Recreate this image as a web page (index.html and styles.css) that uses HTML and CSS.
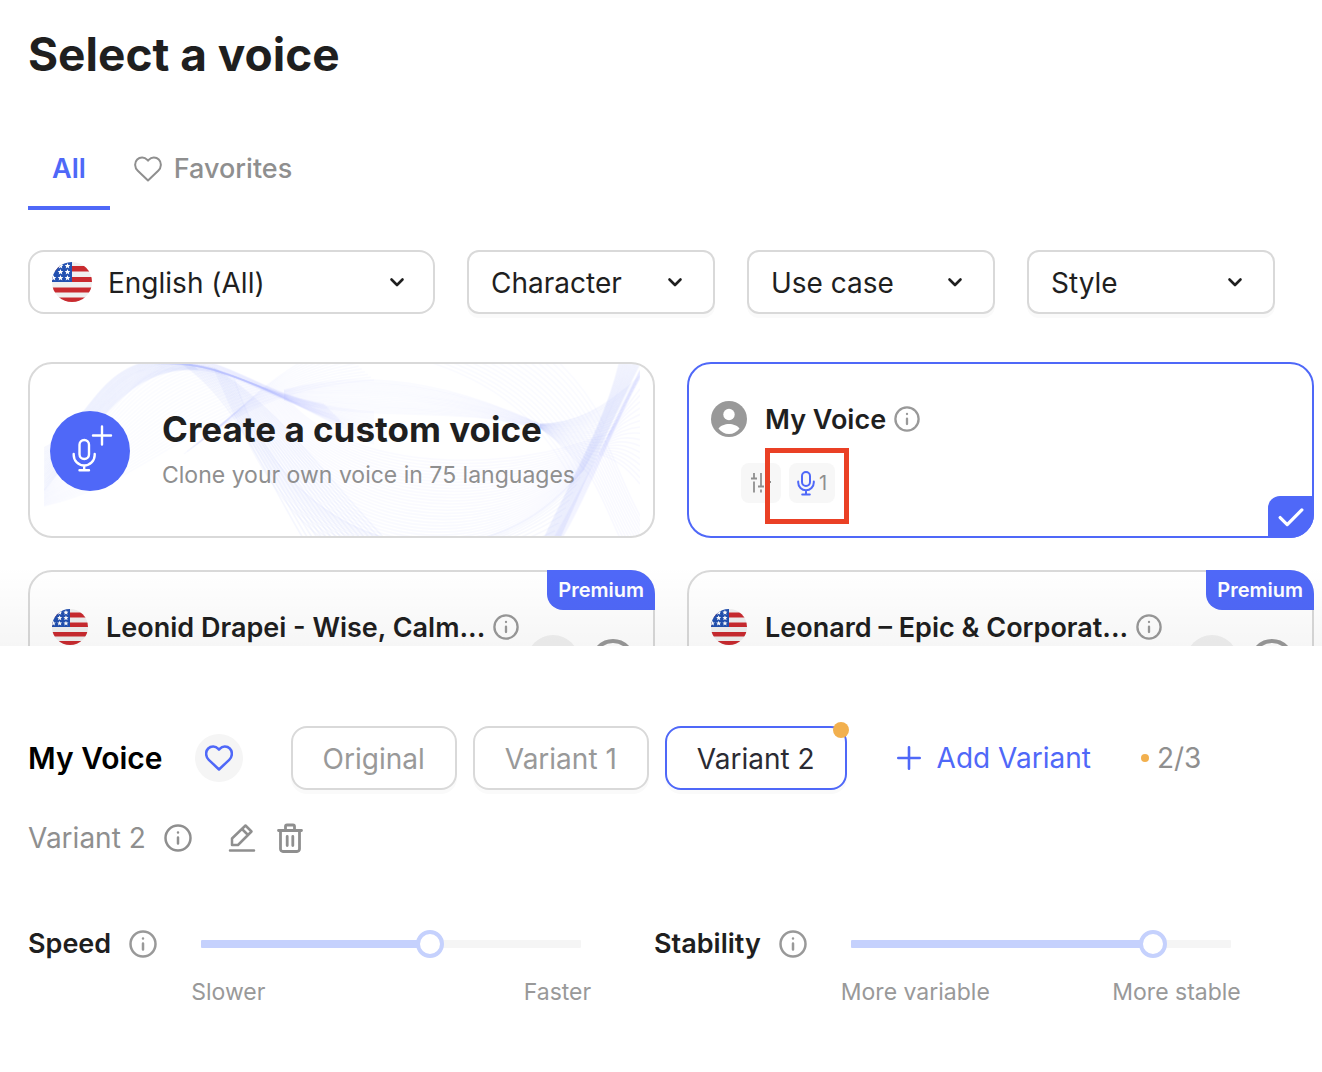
FILE: index.html
```html
<!DOCTYPE html>
<html lang="en">
<head>
    <meta charset="utf-8">
    <meta name="viewport" content="width=device-width, initial-scale=1">
    <title>Select a voice</title>
    <link rel="stylesheet" href="styles.css">
</head>
<body>
    <svg class="sprite" aria-hidden="true">
        <symbol id="flag-us" viewBox="0 0 40 40">
            <clipPath id="flagClip"><circle cx="20" cy="20" r="20"/></clipPath>
            <g clip-path="url(#flagClip)">
                <path fill="#f0f0f0" d="M0 0h40v40H0z"/>
                <path fill="#c92a2f" d="M0 4h40v5.500H0zM0 15h40v5H0zM0 25.500h40v5H0zM0 35.500h40v5H0z"/>
                <path fill="#2250b0" d="M0 0h20v20H0z"/>
                <path fill="#fff" d="m15.500 1 .8 1.900 2 .1-1.500 1.400.5 2-1.800-1.100-1.800 1.100.5-2L12.700 3l2-.1zM8.500 1l.8 1.900 2 .1-1.500 1.400.5 2-1.800-1.100-1.800 1.100.5-2L5.700 3l2-.1zM15.500 7l.8 1.900 2 .1-1.500 1.400.5 2-1.800-1.100-1.800 1.100.5-2L12.700 9l2-.1zM8.500 7l.8 1.900 2 .1-1.500 1.400.5 2-1.800-1.100-1.800 1.100.5-2L5.700 9l2-.1zM15.500 13l.8 1.900 2 .1-1.500 1.400.5 2-1.800-1.100-1.800 1.100.5-2-1.500-1.400 2-.1zM8.500 13l.8 1.900 2 .1-1.500 1.400.5 2-1.800-1.100-1.800 1.100.5-2L5.700 15l2-.1zM1.500 13l.8 1.900 2 .1-1.500 1.400.5 2-1.800-1.100-1.800 1.100.5-2-1.500-1.400 2-.1z"/>
            </g>
        </symbol>
        <symbol id="icon-heart" viewBox="0 0 28 28">
            <path fill="none" stroke="currentColor" stroke-linejoin="round" d="M14 25.500 3.800 15.800C.4 12.600.3 7.400 3.200 4.500c2.800-2.700 7.500-2.400 9.800.1l1 1.100 1-1.100c2.300-2.500 7-2.800 9.800-.1 2.900 2.900 2.800 8.100-.6 11.300z"/>
        </symbol>
        <symbol id="icon-info" viewBox="0 0 28 28">
            <circle cx="14" cy="14" r="12.500" fill="none" stroke="currentColor" stroke-width="2.500"/>
            <path fill="none" stroke="currentColor" stroke-width="2.500" stroke-linecap="round" d="M14 13.500v6M14 8.500v.1"/>
        </symbol>
        <symbol id="icon-chevron" viewBox="0 0 16 16">
            <path fill="none" stroke="currentColor" stroke-width="2.600" stroke-linecap="round" stroke-linejoin="round" d="m2.500 5.500 5.500 5.500 5.500-5.500"/>
        </symbol>
    </svg>

    <main class="voicePage">
        <h1 class="title">Select a voice</h1>

        <nav class="tabs">
            <button class="tab active" type="button">All</button>
            <button class="tab" type="button">
                <svg class="tabIcon"><use href="#icon-heart"/></svg>
                Favorites
            </button>
        </nav>

        <div class="filters">
            <div class="filter wide">
                <svg class="filterFlag"><use href="#flag-us"/></svg>
                <select aria-label="Language"><option>English (All)</option></select>
                <svg class="chevron"><use href="#icon-chevron"/></svg>
            </div>
            <div class="filter">
                <select aria-label="Character"><option>Character</option></select>
                <svg class="chevron"><use href="#icon-chevron"/></svg>
            </div>
            <div class="filter">
                <select aria-label="Use case"><option>Use case</option></select>
                <svg class="chevron"><use href="#icon-chevron"/></svg>
            </div>
            <div class="filter">
                <select aria-label="Style"><option>Style</option></select>
                <svg class="chevron"><use href="#icon-chevron"/></svg>
            </div>
        </div>

        <section class="voiceList">
            <article class="card create">
                <svg class="waves" id="waves" viewBox="0 0 596 172" preserveAspectRatio="none"></svg>
                <svg class="createIcon" viewBox="0 0 80 80">
                    <circle cx="40" cy="40" r="40" fill="#4f68f8"/>
                    <g fill="none" stroke="#fff" stroke-width="2.400" stroke-linecap="round">
                        <rect x="29.500" y="29" width="9.500" height="19" rx="4.750"/>
                        <path d="M23.700 43v1a10.500 10.500 0 0 0 21 0v-1M34.200 55v4M29.500 59.300h9.500M52 15.500v18M43 24.500h18"/>
                    </g>
                </svg>
                <div class="createText">
                    <h2>Create a custom voice</h2>
                    <p>Clone your own voice in 75 languages</p>
                </div>
            </article>

            <article class="card selected">
                <div class="cardBody">
                    <div class="cardHead">
                        <svg class="avatar" viewBox="0 0 36 36">
                            <circle cx="18" cy="18" r="18" fill="#999"/>
                            <circle cx="18" cy="13.500" r="5.700" fill="#fff"/>
                            <path fill="#fff" d="M7.500 27.500C9.500 24.500 14 23 18 23s8.500 1.500 10.500 4.500C26 31 22.300 33 18 33s-8-2-10.500-5.500z"/>
                        </svg>
                        <h3>My Voice</h3>
                        <svg class="info small"><use href="#icon-info"/></svg>
                    </div>
                    <div class="chips">
                        <span class="chip">
                            <svg class="chipSliders" viewBox="0 0 24 24" fill="none" stroke="#8f8f8f" stroke-width="1.800">
                                <path d="M5 2v5M2 7.500h6M5 10.500v11M12 2v13M9 15.500h6M12 18.500v3M19 2v7M16 11h6M19 13.500v8"/>
                            </svg>
                        </span>
                        <span class="chip marked">
                            <svg class="chipMic" viewBox="0 0 18 26" fill="none" stroke="#4f68f8" stroke-width="2" stroke-linecap="round">
                                <rect x="5" y="2" width="8" height="14" rx="4"/>
                                <path d="M1.200 11.500v1a7.800 7.800 0 0 0 15.600 0v-1M9 20.500V24M5.200 24.500h7.600"/>
                            </svg>
                            1
                        </span>
                    </div>
                </div>
                <span class="check">
                    <svg viewBox="0 0 24 18" fill="none" stroke="#fff" stroke-width="3" stroke-linecap="round" stroke-linejoin="round"><path d="m2 9.500 6.500 6.500L22 2.500"/></svg>
                </span>
            </article>

            <article class="card">
                <span class="premium">Premium</span>
                <div class="cardBody">
                    <div class="cardHead">
                        <svg class="avatar"><use href="#flag-us"/></svg>
                        <h3>Leonid Drapei - Wise, Calm...</h3>
                        <svg class="info small"><use href="#icon-info"/></svg>
                    </div>
                </div>
                <div class="actions">
                    <button class="roundButton" type="button" aria-label="Add to favorites"></button>
                    <button class="ringButton" type="button" aria-label="Play"></button>
                </div>
            </article>

            <article class="card">
                <span class="premium">Premium</span>
                <div class="cardBody">
                    <div class="cardHead">
                        <svg class="avatar"><use href="#flag-us"/></svg>
                        <h3>Leonard – Epic &amp; Corporat...</h3>
                        <svg class="info small"><use href="#icon-info"/></svg>
                    </div>
                </div>
                <div class="actions">
                    <button class="roundButton" type="button" aria-label="Add to favorites"></button>
                    <button class="ringButton" type="button" aria-label="Play"></button>
                </div>
            </article>
        </section>

        <section class="panel">
            <div class="variants">
                <h2 class="voiceName">My Voice</h2>
                <button class="favorite" type="button" aria-label="Favorite"><svg><use href="#icon-heart"/></svg></button>
                <div class="variantButtons">
                    <button class="variant" type="button">Original</button>
                    <button class="variant" type="button">Variant 1</button>
                    <button class="variant current" type="button">Variant 2</button>
                </div>
                <button class="addVariant" type="button">
                    <svg viewBox="0 0 24 24" fill="none" stroke="currentColor" stroke-width="2.600" stroke-linecap="round"><path d="M12 1.300v21.400M1.300 12h21.400"/></svg>
                    Add Variant
                </button>
                <span class="counter">2/3</span>
            </div>

            <div class="variantInfo">
                <span>Variant 2</span>
                <svg class="info"><use href="#icon-info"/></svg>
                <button class="iconButton edit" type="button" aria-label="Rename">
                    <svg viewBox="0 0 28 30" fill="none" stroke="currentColor" stroke-width="2.500" stroke-linecap="round" stroke-linejoin="round">
                        <path d="M4 22v-6.500L17.500 2.500l6 6L10 22zM14 6l6 6M2 27.500h24"/>
                    </svg>
                </button>
                <button class="iconButton" type="button" aria-label="Delete">
                    <svg viewBox="0 0 28 30" fill="none" stroke="currentColor" stroke-width="2.800" stroke-linecap="round" stroke-linejoin="round">
                        <path d="M2.500 7.500h23M4.500 8v18A2.500 2.500 0 0 0 7 28.500h14a2.500 2.500 0 0 0 2.500-2.500V8M9.500 7V3.500A1.500 1.500 0 0 1 11 2h6a1.500 1.500 0 0 1 1.500 1.500V7M11.200 13.500v9M16.800 13.500v9"/>
                    </svg>
                </button>
            </div>

            <div class="settings">
                <div class="setting">
                    <label for="speed">Speed</label>
                    <svg class="info"><use href="#icon-info"/></svg>
                    <div class="control">
                        <input id="speed" type="range" min="0" max="100" value="61" style="--fill: 60%">
                        <div class="ends"><span>Slower</span><span>Faster</span></div>
                    </div>
                </div>
                <div class="setting">
                    <label for="stability">Stability</label>
                    <svg class="info"><use href="#icon-info"/></svg>
                    <div class="control">
                        <input id="stability" type="range" min="0" max="100" value="82" style="--fill: 80%">
                        <div class="ends"><span>More variable</span><span>More stable</span></div>
                    </div>
                </div>
            </div>
        </section>
    </main>
    <script src="waves.js"></script>
</body>
</html>
```

FILE: styles.css
```css
* {
    box-sizing: border-box;
}

body {
    margin: 0;
    background: #fff;
    color: #1f1f1f;
    font-family: Inter, "Liberation Sans", sans-serif;
    font-size: 28px;
    line-height: 32px;
}

h1, h2, h3, p {
    margin: 0;
}

button, select {
    font: inherit;
    color: inherit;
}

button {
    padding: 0;
    border: 0;
    background: none;
    cursor: pointer;
}

svg {
    display: block;
    flex: none;
}

.sprite {
    position: absolute;
    width: 0;
    height: 0;
}

.voicePage {
    display: flex;
    flex-direction: column;
    height: 100vh;
}

.title {
    padding: 26px 28px 0;
    font-size: 46px;
    line-height: 56px;
    font-weight: 700;
}

/* tabs */
.tabs {
    display: flex;
    margin: 44px 28px 0;
}

.tab {
    display: flex;
    align-items: center;
    gap: 12px;
    height: 84px;
    padding: 2px 24px 0;
    border-top: 4px solid transparent;
    border-bottom: 4px solid transparent;
    color: #8f8f8f;
    font-size: 27px;
    font-weight: 500;
}

.tab.active {
    border-bottom-color: #4f68f8;
    color: #4f68f8;
    font-weight: 600;
}

.tabIcon {
    width: 28px;
    height: 28px;
    stroke-width: 2;
}

/* filters */
.filters {
    display: flex;
    gap: 32px;
    padding: 40px 8px 0 28px;
}

.filter {
    display: flex;
    align-items: center;
    flex: 0 1 248px;
    height: 64px;
    padding: 0 30px 0 22px;
    border: 2px solid #d9d9d9;
    border-radius: 12px;
    box-shadow: 0 4px 0 #fafafa;
}

.filter.wide {
    flex-basis: 407px;
    padding-right: 28px;
    border-radius: 16px;
    box-shadow: none;
}

.filterFlag {
    width: 40px;
    height: 40px;
    margin-right: 16px;
}

.filter select {
    flex: 1;
    min-width: 0;
    padding: 2px 0 0;
    border: 0;
    background: none;
    appearance: none;
}

.chevron {
    width: 16px;
    height: 16px;
}

/* voice cards */
.voiceList {
    position: relative;
    display: grid;
    grid-template-columns: 1fr 1fr;
    grid-auto-rows: 176px;
    gap: 32px;
    flex: 1;
    min-height: 0;
    margin-top: 48px;
    padding: 0 8px 0 28px;
    overflow: hidden;
}

.voiceList::after {
    content: "";
    position: absolute;
    inset: auto 0 0 0;
    height: 80px;
    background: linear-gradient(rgba(0, 0, 0, 0), rgba(0, 0, 0, 0.035));
    pointer-events: none;
}

.card {
    position: relative;
    display: flex;
    min-width: 0;
    border: 2px solid #d9d9d9;
    border-radius: 24px;
}

.card.selected {
    border-color: #4f68f8;
}

.create {
    align-items: center;
    gap: 32px;
    padding: 2px 0 0 20px;
    overflow: hidden;
}

.waves {
    position: absolute;
    inset: 0 13px 0 14px;
    width: calc(100% - 27px);
    height: 100%;
    opacity: 0.5;
}

.createIcon {
    position: relative;
    width: 80px;
    height: 80px;
}

.createText {
    position: relative;
}

.createText h2 {
    font-size: 35px;
    line-height: 48px;
    font-weight: 700;
}

.createText p {
    margin-top: 6px;
    margin-bottom: 6px;
    color: #8f8f8f;
    font-size: 23px;
}

.cardBody {
    flex: 1;
    padding: 36px 0 0 22px;
}

.cardHead {
    display: flex;
    align-items: center;
    height: 38px;
}

.cardHead h3 {
    margin: 0 8px 0 18px;
    padding-top: 2px;
    font-size: 27px;
    font-weight: 600;
    white-space: nowrap;
}

.avatar {
    width: 36px;
    height: 36px;
}

.info {
    width: 28px;
    height: 28px;
    color: #999;
}

.info.small {
    width: 26px;
    height: 26px;
}

.chips {
    display: flex;
    gap: 8px;
    margin: 25px 0 0 30px;
}

.chip {
    position: relative;
    display: flex;
    align-items: center;
    gap: 4px;
    height: 40px;
    padding: 0 8px;
    border-radius: 8px;
    background: #f7f7f7;
    color: #8f8f8f;
    font-size: 20px;
}

.chipSliders {
    width: 24px;
    height: 24px;
}

.chipMic {
    width: 18px;
    height: 26px;
}

.chip.marked::after {
    content: "";
    position: absolute;
    inset: -15px -14px -21px -24px;
    border: 5px solid #ea4025;
}

.check {
    position: absolute;
    right: -2px;
    bottom: -2px;
    display: grid;
    place-items: center;
    width: 46px;
    height: 42px;
    border-radius: 12px 0 24px 0;
    background: #4f68f8;
}

.check svg {
    width: 26px;
    height: 20px;
}

.premium {
    position: absolute;
    top: -2px;
    right: -2px;
    padding: 0 11px;
    border-radius: 0 24px 0 16px;
    background: #4f68f8;
    color: #fff;
    font-size: 20px;
    line-height: 40px;
    font-weight: 600;
}

.actions {
    display: flex;
    align-items: center;
    align-self: flex-start;
    gap: 12px;
    padding: 63px 18px 0 0;
}

.roundButton {
    width: 52px;
    height: 52px;
    border-radius: 50%;
    background: #f0f0f0;
}

.ringButton {
    width: 44px;
    height: 44px;
    border: 4px solid #999;
    border-radius: 50%;
}

/* bottom panel */
.panel {
    padding: 80px 42px 64px 28px;
}

.variants {
    display: flex;
    align-items: center;
    white-space: nowrap;
}

.voiceName {
    color: #000;
    font-size: 30px;
    font-weight: 600;
}

.favorite {
    display: grid;
    place-items: center;
    width: 48px;
    height: 48px;
    margin: 0 48px 0 32px;
    border-radius: 50%;
    background: #f5f5f5;
    color: #4f68f8;
}

.favorite svg {
    width: 28px;
    height: 28px;
    stroke-width: 2.5;
}

.variantButtons {
    display: flex;
    gap: 16px;
}

.variant {
    position: relative;
    height: 64px;
    padding: 2px 30px 0;
    border: 2px solid #d9d9d9;
    border-radius: 16px;
    box-shadow: 0 4px 0 #fafafa;
    color: #999;
}

.variant.current {
    border-color: #4f68f8;
    color: #2b2b33;
}

.variant.current::after {
    content: "";
    position: absolute;
    top: -6px;
    right: -4px;
    width: 16px;
    height: 16px;
    border-radius: 50%;
    background: #f2b04e;
}

.addVariant {
    display: flex;
    align-items: center;
    gap: 16px;
    margin: 0 50px;
    color: #4f68f8;
}

.addVariant svg {
    width: 24px;
    height: 24px;
}

.counter {
    display: flex;
    align-items: center;
    gap: 8px;
    color: #8f8f8f;
}

.counter::before {
    content: "";
    width: 8px;
    height: 8px;
    border-radius: 50%;
    background: #f2b04e;
}

.variantInfo {
    display: flex;
    align-items: center;
    margin-top: 32px;
    color: #8f8f8f;
}

.variantInfo .info {
    margin-left: 18px;
    color: #8f8f8f;
}

.iconButton {
    margin-left: 20px;
}

.iconButton.edit {
    margin-left: 36px;
}

.iconButton svg {
    width: 28px;
    height: 30px;
}

.settings {
    display: grid;
    grid-template-columns: 1fr 1fr;
    margin-top: 76px;
}

.setting {
    display: flex;
    align-items: flex-start;
}

.setting label {
    font-size: 27px;
    font-weight: 600;
    line-height: 28px;
}

.setting .info {
    margin-left: 18px;
}

.control {
    flex: 0 1 400px;
    margin-left: 34px;
    color: #999;
    font-size: 23px;
}

.control input {
    display: block;
    width: calc(100% - 20px);
    height: 28px;
    margin: 0 10px;
    background: none;
    appearance: none;
}

.control input::-webkit-slider-runnable-track {
    height: 8px;
    border-radius: 1px;
    background: linear-gradient(to right, #c5d1fd var(--fill), #f5f5f5 var(--fill));
}

.control input::-webkit-slider-thumb {
    width: 28px;
    height: 28px;
    margin-top: -10px;
    border: 4px solid #c5d1fd;
    border-radius: 50%;
    background: #fff;
    appearance: none;
}

.ends {
    display: flex;
    justify-content: space-between;
    margin-top: 18px;
}
```

FILE: waves.js
```js
var svg = document.getElementById("waves");

// Each ribbon blends one curve into another: [from, to, lines, opacity]
var ribbons = [
    // left arch
    [[0, 84, 50, 60, 50, -10, 140, -6], [0, 126, 50, 70, 80, 0, 155, 6], 24, 0.1],
    [[140, -6, 190, -2, 220, 30, 280, 40], [155, 6, 190, 8, 220, 30, 300, 60], 14, 0.07],
    [[0, 126, 60, 70, 80, 2, 150, -4], [0, 142, 90, 122, 140, 60, 240, 31], 24, 0.04],
    [[110, 0, 180, -8, 220, 40, 330, 48], [150, 0, 200, 10, 250, 40, 330, 80], 18, 0.05],
    // upper right sweep
    [[140, 90, 200, 40, 260, 20, 330, 16], [180, 60, 220, 20, 250, 0, 290, -20], 14, 0.05],
    [[240, 26, 340, 0, 430, 30, 496, 60], [240, 36, 330, 60, 420, 40, 496, 66], 20, 0.05],
    [[250, -30, 400, -10, 480, 20, 530, 120], [420, -60, 500, -30, 540, 20, 560, 60], 16, 0.05],
    // large fan
    [[133, -3, 190, 30, 220, 110, 259, 174], [170, 4, 230, 40, 280, 110, 340, 174], 18, 0.1],
    [[190, 14, 250, 200, 440, 230, 540, 105], [240, 31, 300, 110, 470, 110, 560, 70], 28, 0.06],
    [[170, 4, 230, 150, 300, 260, 500, 190], [190, 14, 250, 200, 440, 230, 540, 105], 12, 0.08],
    // right ribbons
    [[596, 0, 570, 50, 540, 120, 516, 174], [575, 0, 560, 60, 530, 110, 500, 174], 26, 0.08],
    [[596, 6, 560, 80, 540, 120, 510, 174], [596, 14, 565, 70, 545, 130, 518, 174], 10, 0.07],
    [[496, 60, 530, 60, 560, 45, 596, 12], [496, 64, 520, 80, 535, 100, 545, 110], 28, 0.08],
    [[545, 110, 555, 125, 565, 150, 576, 174], [560, 75, 570, 90, 585, 140, 610, 174], 12, 0.07],
    [[596, 25, 585, 40, 575, 50, 565, 70], [596, 120, 580, 100, 570, 95, 555, 90], 16, 0.07]
];

ribbons.forEach(function (ribbon) {
    var from = ribbon[0], to = ribbon[1], lines = ribbon[2];
    for (var i = 0; i < lines; i++) {
        var t = i / (lines - 1);
        var p = from.map(function (v, k) {
            return (v + (to[k] - v) * t).toFixed(1);
        });
        var path = document.createElementNS("http://www.w3.org/2000/svg", "path");
        path.setAttribute("d", "M" + p[0] + " " + p[1] + "C" + p.slice(2).join(" "));
        path.setAttribute("fill", "none");
        path.setAttribute("stroke", "#4f68f8");
        path.setAttribute("stroke-width", "1.6");
        path.setAttribute("stroke-opacity", ribbon[3]);
        svg.appendChild(path);
    }
});
```
